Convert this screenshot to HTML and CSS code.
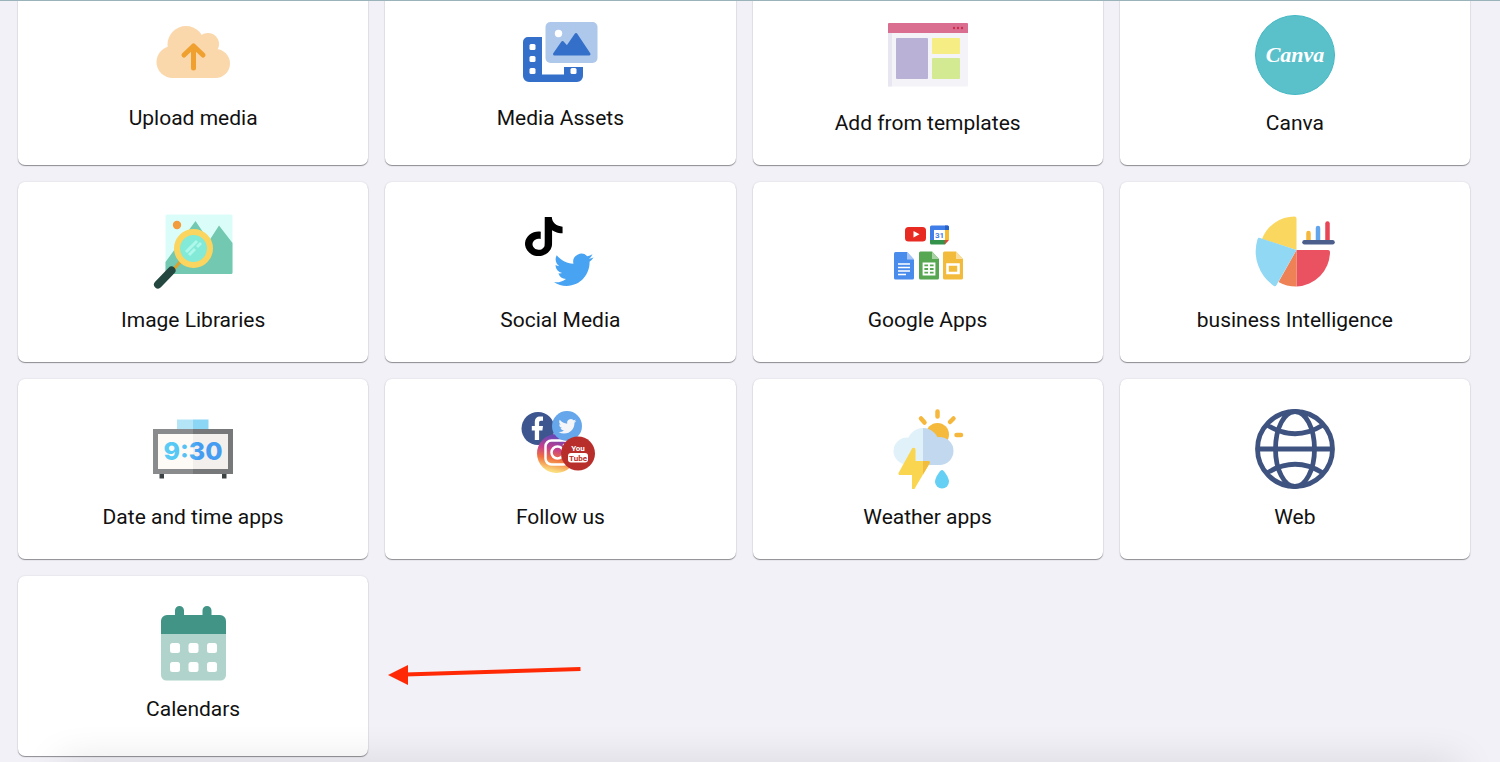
FILE: index.html
```html
<!DOCTYPE html>
<html lang="en">
<head>
    <meta charset="UTF-8">
    <meta name="viewport" content="width=device-width, initial-scale=1.0">
    <title>Add content</title>
    <link rel="stylesheet" href="styles.css">
</head>
<body>
    <main class="content">
        <div class="app_grid">
            <button type="button" class="app_card">
                <svg class="icon_small" viewBox="0 0 75 75" aria-hidden="true">
                    <g fill="#fbd7ac">
                        <circle cx="30" cy="29.5" r="18.5"/>
                        <circle cx="52" cy="29" r="11"/>
                        <circle cx="16.5" cy="47" r="16"/>
                        <circle cx="59.5" cy="48.5" r="14.5"/>
                        <path d="M16 30h43v33H16z"/>
                    </g>
                    <path d="M37.5 53V31M28 40l9.500-9 9.500 9" fill="none" stroke="#f0a02f" stroke-width="5" stroke-linecap="round" stroke-linejoin="round"/>
                </svg>
                <span class="app_name">Upload media</span>
            </button>

            <button type="button" class="app_card">
                <svg class="icon_small" viewBox="0 0 75 75" aria-hidden="true">
                    <path d="M5 22h14v37.5h22V52h19v9a6 6 0 0 1-6 6H6a6 6 0 0 1-6-6V27a5 5 0 0 1 5-5z" fill="#3470c9"/>
                    <g fill="#fff">
                        <rect x="6.5" y="29" width="6" height="6" rx="1.5"/>
                        <rect x="6.5" y="41" width="6" height="6" rx="1.5"/>
                        <rect x="6.5" y="53" width="6" height="6" rx="1.5"/>
                        <rect x="47.5" y="53" width="6" height="6" rx="1.5"/>
                    </g>
                    <rect x="22.5" y="7" width="52" height="41" rx="5" fill="#aec8eb"/>
                    <circle cx="35.5" cy="18.5" r="3.7" fill="#fff"/>
                    <path d="M31.5 39l8-11.500 4.500 5 9-13 13 19.500z" fill="#3470c9" stroke="#3470c9" stroke-width="3" stroke-linejoin="round"/>
                </svg>
                <span class="app_name">Media Assets</span>
            </button>

            <button type="button" class="app_card">
                <svg class="icon" viewBox="0 0 80 80" aria-hidden="true">
                    <rect y="8" width="80" height="63.5" rx="1" fill="#f4f3f8"/>
                    <path d="M0 18h4v53.5H0z" fill="#e8e6f0"/>
                    <path d="M0 9a1 1 0 0 1 1-1h78a1 1 0 0 1 1 1v9H0z" fill="#da6e90"/>
                    <g fill="#c9304f">
                        <circle cx="66" cy="13" r="1.2"/>
                        <circle cx="70" cy="13" r="1.2"/>
                        <circle cx="74" cy="13" r="1.2"/>
                    </g>
                    <rect x="8" y="23" width="32" height="41" rx="1" fill="#b9b1d6"/>
                    <rect x="44" y="23" width="28" height="16" rx="1" fill="#f6ed84"/>
                    <rect x="44" y="43" width="28" height="21" rx="1" fill="#d4ea92"/>
                </svg>
                <span class="app_name">Add from templates</span>
            </button>

            <button type="button" class="app_card">
                <svg class="icon" viewBox="0 0 80 80" aria-hidden="true">
                    <circle cx="40" cy="40" r="39.5" fill="#5ac1cb" stroke="#43b8c3"/>
                    <text class="canva_text" x="40" y="47" text-anchor="middle">Canva</text>
                </svg>
                <span class="app_name">Canva</span>
            </button>

            <button type="button" class="app_card">
                <svg class="icon" viewBox="0 0 80 80" aria-hidden="true">
                    <rect x="12.5" y="2.5" width="67" height="59.5" rx="1.5" fill="#dbfdfa"/>
                    <path d="M12.5 50l30-41L56 29l10-15.500L79.500 31v29.500A1.500 1.500 0 0 1 78 62H14a1.500 1.500 0 0 1-1.500-1.500z" fill="#73c8b1"/>
                    <circle cx="24" cy="13" r="4.2" fill="#f39c3d"/>
                    <path d="M28 49l-8 9" stroke="#dba22c" stroke-width="3"/>
                    <path d="M18.5 58.5L5 72.500" stroke="#24483f" stroke-width="8" stroke-linecap="round"/>
                    <circle cx="40.5" cy="36.5" r="16.5" fill="#82ead6" stroke="#fad55f" stroke-width="6"/>
                    <path d="M33 40l11-11M36 43l6-6M44 35l4-4" stroke="#aef7eb" stroke-width="3"/>
                </svg>
                <span class="app_name">Image Libraries</span>
            </button>

            <button type="button" class="app_card">
                <svg class="icon" viewBox="0 0 80 80" aria-hidden="true">
                    <defs>
                        <path id="bird" d="M23.953 4.57a10 10 0 0 1-2.825.775 4.958 4.958 0 0 0 2.163-2.723c-.951.555-2.005.959-3.127 1.184a4.92 4.92 0 0 0-8.384 4.482C7.69 8.095 4.067 6.13 1.64 3.162a4.822 4.822 0 0 0-.666 2.475c0 1.71.87 3.213 2.188 4.096a4.904 4.904 0 0 1-2.228-.616v.06a4.923 4.923 0 0 0 3.946 4.827 4.996 4.996 0 0 1-2.212.085 4.936 4.936 0 0 0 4.604 3.417 9.867 9.867 0 0 1-6.102 2.105c-.39 0-.779-.023-1.17-.067a13.995 13.995 0 0 0 7.557 2.209c9.053 0 13.998-7.496 13.998-13.985 0-.21 0-.42-.015-.63A9.935 9.935 0 0 0 24 4.59z"/>
                    </defs>
                    <path transform="translate(2.2 5) scale(1.8 1.63)" d="M12.525.02c1.31-.02 2.61-.01 3.91-.02.08 1.53.63 3.09 1.75 4.17 1.12 1.11 2.7 1.62 4.24 1.79v4.03c-1.44-.05-2.89-.35-4.2-.97-.57-.26-1.1-.59-1.62-.93-.01 2.92.01 5.84-.02 8.75-.08 1.4-.54 2.79-1.35 3.94-1.31 1.92-3.58 3.17-5.91 3.21-1.43.08-2.86-.31-4.08-1.03-2.02-1.19-3.44-3.37-3.65-5.71-.02-.5-.03-1-.01-1.49.18-1.9 1.12-3.72 2.58-4.96 1.66-1.44 3.98-2.13 6.15-1.72.02 1.48-.04 2.96-.04 4.44-.99-.32-2.15-.23-3.02.37-.63.41-1.11 1.04-1.36 1.75-.21.51-.15 1.07-.14 1.61.24 1.64 1.82 3.02 3.5 2.87 1.12-.01 2.19-.66 2.77-1.61.19-.33.4-.67.41-1.06.1-1.79.06-3.57.07-5.36.01-4.03-.01-8.05.02-12.07z"/>
                    <use href="#bird" transform="translate(34 38) scale(1.65)" fill="#48a4f2"/>
                </svg>
                <span class="app_name">Social Media</span>
            </button>

            <button type="button" class="app_card">
                <svg class="icon" viewBox="0 0 80 80" aria-hidden="true">
                    <!-- youtube -->
                    <rect x="17" y="15" width="21" height="14.5" rx="3.5" fill="#e82b22"/>
                    <path d="M25.5 19l6 3.200-6 3.300z" fill="#fff"/>
                    <!-- calendar -->
                    <path d="M42 15a1.5 1.5 0 0 1 1.5-1.5h16A1.5 1.5 0 0 1 61 15v3H46v10h-4z" fill="#3f7de8"/>
                    <path d="M57 18h4v10h-4z" fill="#f7ba2d"/>
                    <path d="M42 28h15v4.5H43.5A1.5 1.5 0 0 1 42 31z" fill="#35924a"/>
                    <path d="M57 28h4l-4 4.5z" fill="#e64235"/>
                    <path d="M57 13.5h2.5A1.5 1.5 0 0 1 61 15v3h-4z" fill="#2862c7"/>
                    <path d="M46 18h11v10H46z" fill="#fff"/>
                    <text class="day_text" x="51.5" y="26" text-anchor="middle">31</text>
                    <!-- docs -->
                    <path d="M7.5 40H19l7 7.5v18.5a1.5 1.5 0 0 1-1.5 1.5h-17A1.5 1.5 0 0 1 6 66V41.5A1.5 1.5 0 0 1 7.5 40z" fill="#4a8cec"/>
                    <path d="M19 40l7 7.5h-7z" fill="#a5c5f7"/>
                    <path d="M10 52h12M10 55.5h12M10 59h12M10 62.5h8" stroke="#fff" stroke-width="1.5"/>
                    <!-- sheets -->
                    <path d="M32.5 39.5H44l7 7.5v19a1.5 1.5 0 0 1-1.5 1.5h-17A1.5 1.5 0 0 1 31 66V41a1.5 1.5 0 0 1 1.5-1.5z" fill="#57a652"/>
                    <path d="M44 39.5l7 7.5h-7z" fill="#a8d3a5"/>
                    <path d="M35.500 51.5h11v11h-11zM41 51.500v11M35.500 55.200h11M35.500 58.900h11" fill="none" stroke="#fff" stroke-width="1.8"/>
                    <!-- slides -->
                    <path d="M56.5 39.5H68l7 7.5v19a1.5 1.5 0 0 1-1.5 1.5h-17A1.5 1.5 0 0 1 55 66V41a1.5 1.5 0 0 1 1.5-1.5z" fill="#f3bb3c"/>
                    <path d="M68 39.5l7 7.5h-7z" fill="#f9dea0"/>
                    <path d="M59.5 52.5h11v8.5h-11z" fill="none" stroke="#fff" stroke-width="2.6"/>
                </svg>
                <span class="app_name">Google Apps</span>
            </button>

            <button type="button" class="app_card">
                <svg class="icon" viewBox="0 0 80 80" aria-hidden="true">
                    <path d="M41.5 38V6.500a2 2 0 0 0-2-2A35 35 0 0 0 7 27z" fill="#fad75f"/>
                    <path d="M41.5 38H73a2 2 0 0 1 2 2A35 35 0 0 1 41.500 74.500z" fill="#ea5262"/>
                    <path d="M41.5 38v36.500A36 36 0 0 1 23.500 70z" fill="#ee8156"/>
                    <path d="M41.5 38L5 26a2 2 0 0 0-2.500 1.200A42 42 0 0 0 19 74a2 2 0 0 0 2.500-1z" fill="#90d8f4"/>
                    <g fill="none" stroke-width="4.5" stroke-linecap="round">
                        <path d="M53.5 21v8" stroke="#f5b73c"/>
                        <path d="M63 16v13" stroke="#61a5ec"/>
                        <path d="M72.5 11.500V29" stroke="#e84556"/>
                        <path d="M49.5 30.300h28" stroke="#4b5e8c"/>
                    </g>
                </svg>
                <span class="app_name">business Intelligence</span>
            </button>

            <button type="button" class="app_card">
                <svg class="icon" viewBox="0 0 80 80" aria-hidden="true">
                    <defs>
                        <linearGradient id="digits">
                            <stop offset="0" stop-color="#5bcdf5"/>
                            <stop offset=".35" stop-color="#55c3f3"/>
                            <stop offset=".6" stop-color="#459df2"/>
                            <stop offset="1" stop-color="#459df2"/>
                        </linearGradient>
                    </defs>
                    <path d="M24 10.5h16V20H24z" fill="#b4e5f6"/>
                    <path d="M40 10.5h15.5V20H40z" fill="#8bd6f5"/>
                    <path d="M6.5 65H11v4.500H6.500zM69 65h4.500v4.500H69z" fill="#3c4244"/>
                    <path d="M0 20h40v45H0z" fill="#8a8b8d"/>
                    <path d="M40 20h40v45H40z" fill="#77787a"/>
                    <path d="M5 25h35v35H5z" fill="#fefaf6"/>
                    <path d="M40 25h35v35H40z" fill="#f3efed"/>
                    <text class="clock_text" x="40" y="51" text-anchor="middle" fill="url(#digits)">9:30</text>
                </svg>
                <span class="app_name">Date and time apps</span>
            </button>

            <button type="button" class="app_card">
                <svg class="icon" viewBox="0 0 80 80" aria-hidden="true">
                    <defs>
                        <linearGradient id="insta" x1=".6" y1="0" x2=".4" y2="1">
                            <stop offset=".1" stop-color="#6a47b5"/>
                            <stop offset=".4" stop-color="#c63f8c"/>
                            <stop offset=".65" stop-color="#f0703f"/>
                            <stop offset=".95" stop-color="#fbdc7c"/>
                        </linearGradient>
                    </defs>
                    <circle cx="18" cy="19.5" r="16.5" fill="#3d568f"/>
                    <path d="M14.8 31V21.500h-3V17h3v-3.500c0-4.300 2-6 5.500-6H23v4.300h-2c-1.500 0-1.900.7-1.900 2V17H23l-.6 4.500h-3.300V31z" fill="#fff"/>
                    <circle cx="36.5" cy="44.5" r="19.5" fill="url(#insta)"/>
                    <rect x="25.5" y="31.5" width="24" height="24" rx="6" fill="none" stroke="#fff" stroke-width="2.5"/>
                    <circle cx="37.5" cy="43.5" r="6" fill="none" stroke="#fff" stroke-width="2.5"/>
                    <circle cx="44" cy="36" r="1.3" fill="#fff"/>
                    <circle cx="47" cy="17" r="15" fill="#65a7ea"/>
                    <use href="#bird" transform="translate(38.5 8.5) scale(.74)" fill="#f3f5f8"/>
                    <circle cx="58" cy="44.5" r="17" fill="#b82e2b"/>
                    <text class="tube_text" x="58" y="42" text-anchor="middle" fill="#fff">You</text>
                    <rect x="48" y="44" width="20" height="9.5" rx="3" fill="#fff"/>
                    <text class="tube_text" x="58" y="51.5" text-anchor="middle" fill="#b82e2b">Tube</text>
                </svg>
                <span class="app_name">Follow us</span>
            </button>

            <button type="button" class="app_card">
                <svg class="icon" viewBox="0 0 80 80" aria-hidden="true">
                    <defs>
                        <clipPath id="left_half"><path d="M0 0h35v80H0z"/></clipPath>
                        <clipPath id="right_half"><path d="M35 0h45v80H35z"/></clipPath>
                    </defs>
                    <circle cx="49.5" cy="25.5" r="11.5" fill="#f5b93c"/>
                    <path d="M49.5 2.500v5M33 9.500l3.500 4M65.500 9.500L62 13M68.500 26H73" stroke="#f5b83d" stroke-width="4.5" stroke-linecap="round"/>
                    <g clip-path="url(#left_half)" fill="#e1f1fa">
                        <circle cx="19" cy="42" r="13.5"/>
                        <circle cx="35" cy="35" r="16"/>
                        <path d="M19 35h20v21H19z"/>
                    </g>
                    <g clip-path="url(#right_half)" fill="#c2d8ee">
                        <circle cx="35" cy="35" r="16"/>
                        <circle cx="51.5" cy="42" r="14"/>
                        <path d="M34 35h18v21H34z"/>
                    </g>
                    <path d="M23 40.500a2 2 0 0 1 4 .5v11h13a1.500 1.500 0 0 1 1 2.500L26.500 79a1.500 1.500 0 0 1-3-.5V66h-12a1.500 1.500 0 0 1-1.500-2z" transform="translate(.5)" fill="#fad650"/>
                    <path d="M35 52h5.500a1.500 1.500 0 0 1 1 2.500L35 65.500z" fill="#f2bd3e"/>
                    <path d="M54 61c2 0 7 8 7 11.500a7 7 0 0 1-14 0c0-3.500 5-11.500 7-11.500z" fill="#66cff4"/>
                </svg>
                <span class="app_name">Weather apps</span>
            </button>

            <button type="button" class="app_card">
                <svg class="icon" viewBox="0 0 80 80" aria-hidden="true" fill="none" stroke="#3f5380" stroke-width="4.8">
                    <circle cx="40" cy="40" r="37.5"/>
                    <ellipse cx="40" cy="40" rx="19.5" ry="37.5"/>
                    <path d="M3 40h74M12 16q28 17.500 56 0M12 64q28-17.500 56 0"/>
                </svg>
                <span class="app_name">Web</span>
            </button>

            <button type="button" class="app_card">
                <svg class="icon_small" viewBox="0 0 75 75" aria-hidden="true">
                    <path d="M5 28h65v41a5.5 5.5 0 0 1-5.5 5.5h-54A5.5 5.5 0 0 1 5 69z" fill="#b0d3cb"/>
                    <path d="M5 28V15a6 6 0 0 1 6-6h8V4.500a4.500 4.500 0 0 1 9 0V9h18.500V4.500a4.500 4.500 0 0 1 9 0V9H64a6 6 0 0 1 6 6v13z" fill="#419486"/>
                    <g fill="#fff">
                        <rect x="14" y="37" width="10" height="10" rx="2.5"/>
                        <rect x="32.5" y="37" width="10" height="10" rx="2.5"/>
                        <rect x="51" y="37" width="10" height="10" rx="2.5"/>
                        <rect x="14" y="56" width="10" height="10" rx="2.5"/>
                        <rect x="32.5" y="56" width="10" height="10" rx="2.5"/>
                        <rect x="51" y="56" width="10" height="10" rx="2.5"/>
                    </g>
                </svg>
                <span class="app_name">Calendars</span>
            </button>

            <svg class="arrow" viewBox="0 0 200 22" aria-hidden="true">
                <path d="M20 10.5L195.500 5" stroke="#ff2a05" stroke-width="4"/>
                <path d="M3 11L23 1v20z" fill="#ff2a05"/>
            </svg>
        </div>
    </main>
    <div class="bottom_shadow"></div>
</body>
</html>
```
FILE: styles.css
```css
body{
    margin: 0px;
    padding: 0px;
    background-color: #f2f1f7;
    font-family: Roboto, "Liberation Sans", sans-serif;
    overflow: hidden;
}
.content{
    border-top: 1px solid #9ab3bb;
    overflow: hidden;
}
.app_grid{
    display: grid;
    grid-template-columns: repeat(4, 1fr);
    gap: 17px;
    margin-top: -16px;
    padding: 0px 30px 20px 18px;
}
.app_card{
    display: flex;
    flex-direction: column;
    align-items: center;
    justify-content: flex-start;
    min-height: 180px;
    padding: 30px 10px 20px;
    border: none;
    border-radius: 7px;
    background-color: white;
    box-shadow: 0px 1px 1px rgba(0, 0, 0, 0.4), 0px 0px 2px rgba(60, 20, 60, 0.12);
    color: #111;
    font-family: inherit;
    font-size: 21px;
    line-height: 26px;
    cursor: pointer;
}
.app_card:hover{
    background-color: #fafafa;
}
.icon{
    width: 80px;
    height: 80px;
}
.icon_small{
    width: 75px;
    height: 75px;
}
.app_name{
    margin-top: 15px;
}
.canva_text{
    font-family: "Liberation Serif", serif;
    font-size: 22px;
    font-style: italic;
    font-weight: 700;
    fill: white;
}
.day_text{
    font-size: 8px;
    font-weight: 700;
    fill: #3f7de8;
}
.clock_text{
    font-family: Inter, sans-serif;
    font-size: 25px;
    font-weight: 800;
}
.tube_text{
    font-family: Roboto, sans-serif;
    font-size: 8px;
    font-weight: 700;
}
.arrow{
    width: 200px;
    height: 22px;
    margin-top: 88px;
}
.bottom_shadow{
    position: fixed;
    left: 60px;
    right: 40px;
    bottom: -20px;
    height: 16px;
    box-shadow: 0px 0px 40px rgba(0, 0, 0, 0.2);
    pointer-events: none;
}
```
